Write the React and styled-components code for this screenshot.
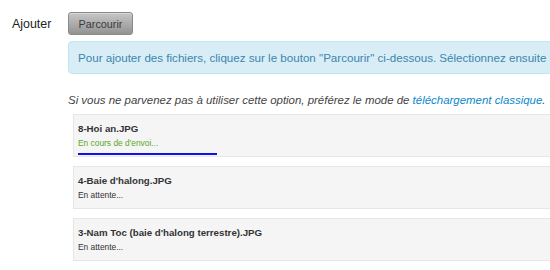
import styled, { createGlobalStyle } from "styled-components";

const GlobalStyle = createGlobalStyle`
  html, body {
    margin: 0;
    padding: 0;
    background: #fff;
    overflow: hidden;
  }
  body {
    font-family: "Liberation Sans", Helvetica, Arial, sans-serif;
    color: #333;
  }
`;

const files = [
  { name: "8-Hoi an.JPG", status: "En cours de d'envoi...", active: true, progress: 139 },
  { name: "4-Baie d'halong.JPG", status: "En attente..." },
  { name: "3-Nam Toc (baie d'halong terrestre).JPG", status: "En attente..." },
];

export default function App() {
  return (
    <>
      <GlobalStyle />
      <Page>
        <Label>Ajouter</Label>
        <Content>
          <BrowseButton>Parcourir</BrowseButton>
          <InfoAlert>
            Pour ajouter des fichiers, cliquez sur le bouton "Parcourir"
            ci-dessous. Sélectionnez ensuite les fichiers à envoyer.
          </InfoAlert>
          <Hint>
            Si vous ne parvenez pas à utiliser cette option, préférez le mode
            de <a href="#">téléchargement classique</a>.
          </Hint>
          <FileList>
            {files.map((file) => (
              <FileCard key={file.name}>
                <FileName>{file.name}</FileName>
                <FileStatus active={file.active}>{file.status}</FileStatus>
                {file.progress && (
                  <ProgressBar style={{ width: file.progress }} />
                )}
              </FileCard>
            ))}
          </FileList>
        </Content>
      </Page>
    </>
  );
}

const Page = styled.div`
  display: flex;
  width: 550px;
  height: 270px;
  overflow: hidden;
`;

const Label = styled.div`
  width: 56px;
  flex-shrink: 0;
  padding-left: 12px;
  padding-top: 17px;
  font-size: 12.4px;
  line-height: 15px;
  color: #222;
`;

const Content = styled.div`
  display: flex;
  flex-direction: column;
  align-items: flex-start;
  padding-top: 12px;
  flex-shrink: 0;
`;

const BrowseButton = styled.button`
  width: 65px;
  height: 23px;
  padding: 0;
  border: 1px solid #8a8a8a;
  border-radius: 3px;
  background: linear-gradient(#c6c6c6, #939393);
  box-shadow: inset 0 1px 0 rgba(255, 255, 255, 0.35);
  font-family: "Liberation Sans", Helvetica, Arial, sans-serif;
  font-size: 10.8px;
  color: #3a3a3a;
`;

const InfoAlert = styled.div`
  margin-top: 6px;
  width: 560px;
  height: 33px;
  box-sizing: border-box;
  padding: 0 9px;
  display: flex;
  align-items: center;
  white-space: nowrap;
  overflow: hidden;
  background: #d9edf7;
  border: 1px solid #bce8f1;
  border-radius: 4px;
  font-size: 11.6px;
  color: #3a87ad;
`;

const Hint = styled.p`
  margin: 17px 0 0;
  font-size: 11.45px;
  line-height: 18px;
  font-style: italic;
  color: #444;
  white-space: nowrap;

  a {
    color: #0a88cc;
    text-decoration: none;
  }
`;

const FileList = styled.div`
  display: flex;
  flex-direction: column;
  gap: 9px;
  margin-top: 5px;
  margin-left: 5px;
`;

const FileCard = styled.div`
  width: 560px;
  height: 43px;
  box-sizing: border-box;
  padding: 7px 0 0 4px;
  background: #f5f5f5;
  border: 1px solid #e6e6e6;
  border-right: none;
`;

const FileName = styled.div`
  font-size: 9.7px;
  line-height: 13px;
  font-weight: bold;
  color: #333;
`;

const FileStatus = styled.div`
  margin-top: 2px;
  font-size: 8.4px;
  line-height: 12px;
  color: ${({ active }) => (active ? "#5aa81f" : "#333")};
`;

const ProgressBar = styled.div`
  height: 2px;
  margin-top: 4px;
  background: #1010e8;
`;
